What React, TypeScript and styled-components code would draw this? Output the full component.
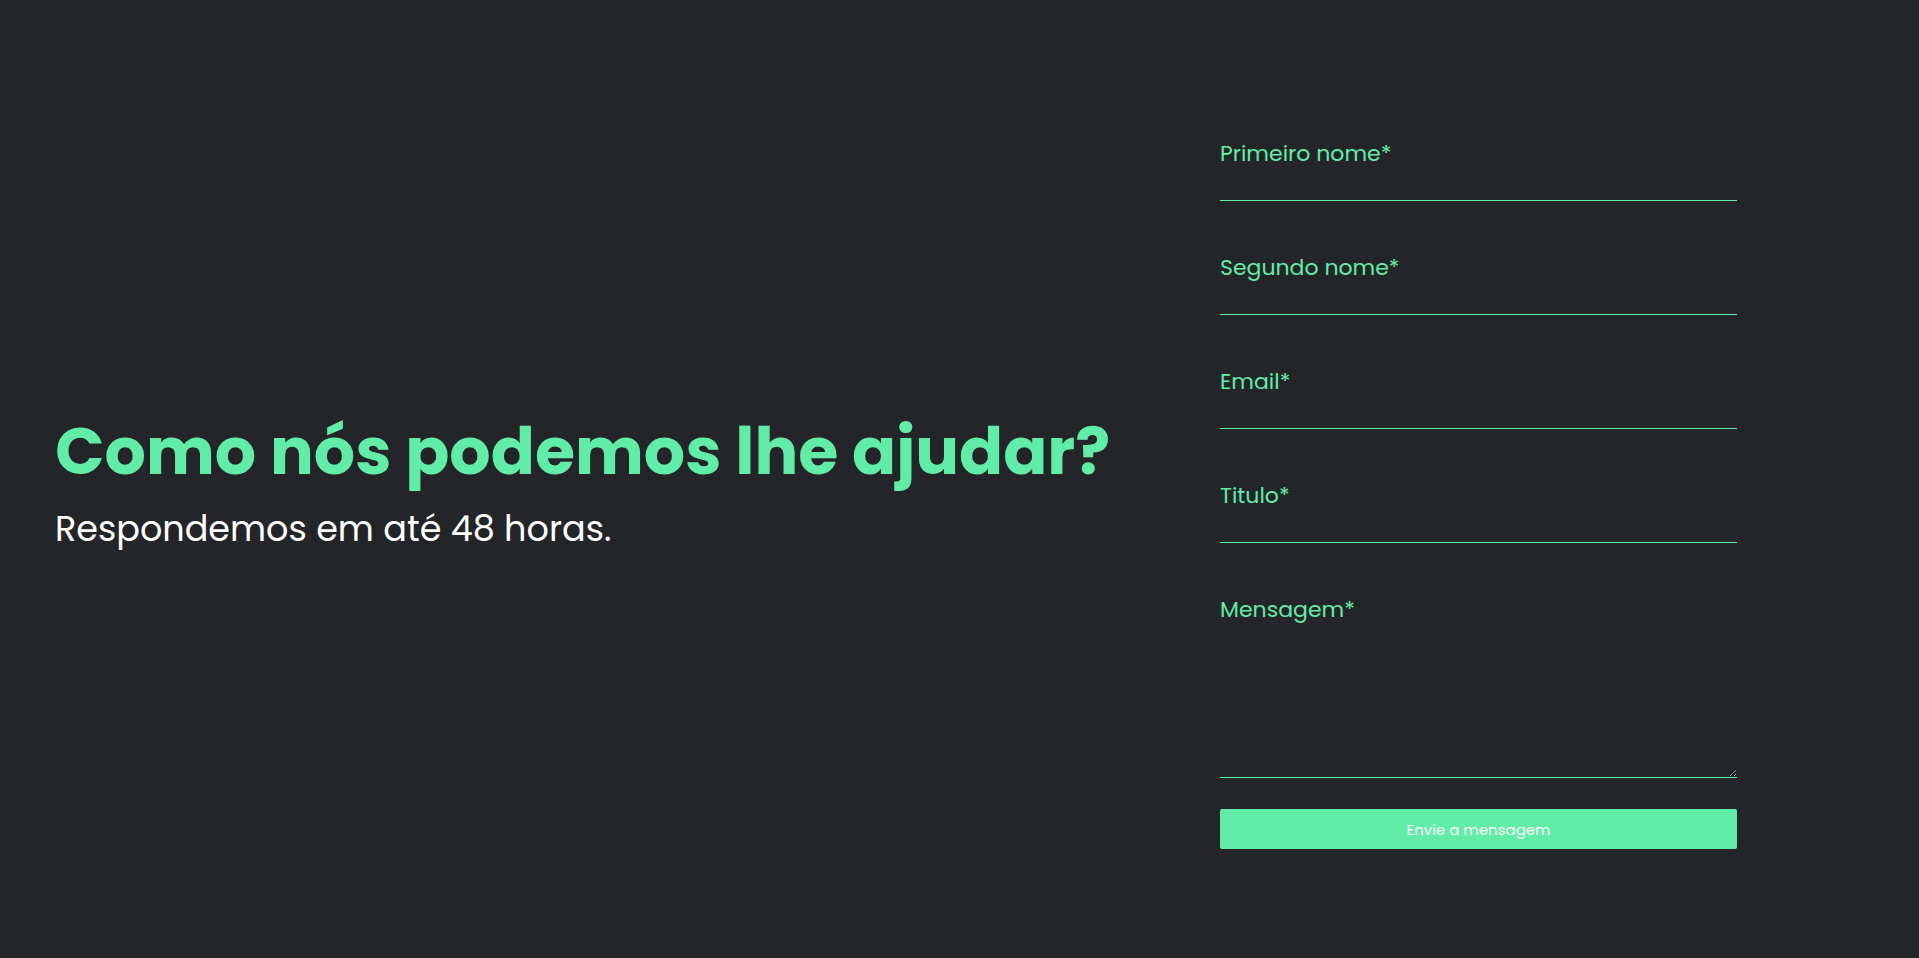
import * as React from 'react'
import styled, { createGlobalStyle } from 'styled-components'

const GlobalStyle = createGlobalStyle`
  * {
    box-sizing: border-box;
  }
  html, body {
    margin: 0;
    padding: 0;
    background: #232529;
    font-family: Poppins, Inter, 'Noto Sans', sans-serif;
  }
`

const Page = styled.main`
  display: flex;
  align-items: center;
  min-height: 100vh;
  padding: 0 182px 0 55px;
`

const Intro = styled.section`
  flex: 1;
  padding-bottom: 6px;
`

const Title = styled.h1`
  margin: 0;
  color: #61eda8;
  font-size: 65px;
  font-weight: 700;
  line-height: 1.6;
  white-space: nowrap;
`

const Subtitle = styled.p`
  margin: 0;
  color: #ffffff;
  font-size: 35px;
  font-weight: 400;
  line-height: 1.4;
`

const Form = styled.form`
  display: flex;
  flex-direction: column;
  width: 517px;
  padding-top: 30px;
`

const Field = styled.div<{ $last?: boolean }>`
  display: flex;
  flex-direction: column;
  margin-bottom: ${(p) => (p.$last ? 31 : 52)}px;
`

const Label = styled.label`
  color: #61eda8;
  font-size: 22px;
  line-height: 30px;
`

const Input = styled.input`
  height: 32px;
  background: transparent;
  border: none;
  border-bottom: 1px solid #61eda8;
  color: #ffffff;
  font: inherit;
  outline: none;
`

const TextArea = styled.textarea`
  height: 153px;
  background: transparent;
  border: none;
  border-bottom: 1px solid #61eda8;
  color: #ffffff;
  font: inherit;
  outline: none;
`

const Button = styled.button`
  height: 40px;
  border: none;
  border-radius: 2px;
  background: #61eda8;
  color: #ffffff;
  font-family: inherit;
  font-size: 15px;
  cursor: pointer;
`

const fields = ['Primeiro nome*', 'Segundo nome*', 'Email*', 'Titulo*']

const App: React.FC = () => {
  return (
    <>
      <GlobalStyle />
      <Page>
        <Intro>
          <Title>Como nós podemos lhe ajudar?</Title>
          <Subtitle>Respondemos em até 48 horas.</Subtitle>
        </Intro>
        <Form onSubmit={(e) => e.preventDefault()}>
          {fields.map((f) => (
            <Field key={f}>
              <Label>{f}</Label>
              <Input type="text" />
            </Field>
          ))}
          <Field $last>
            <Label>Mensagem*</Label>
            <TextArea />
          </Field>
          <Button type="submit">Envie a mensagem</Button>
        </Form>
      </Page>
    </>
  )
}

export default App
